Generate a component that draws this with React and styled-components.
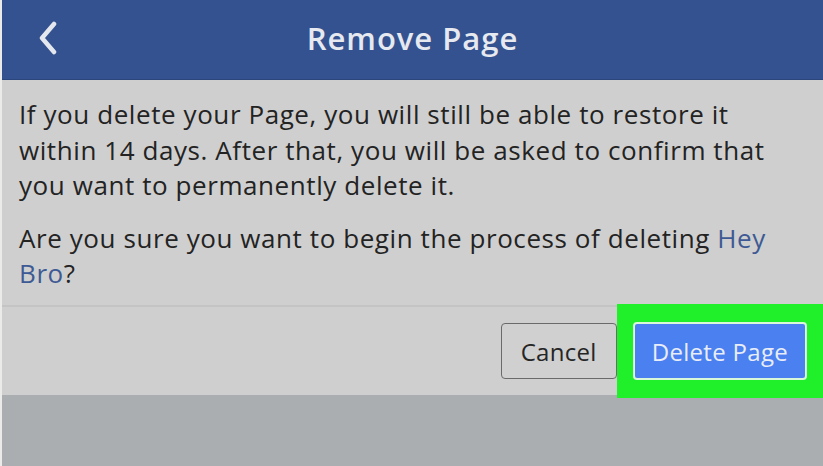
import React from 'react'
import styled, { createGlobalStyle } from 'styled-components'

const Global = createGlobalStyle`
html, body {
  margin: 0;
  padding: 0;
  background: #abaeb1;
}
body {
  font-family: "Open Sans", "Liberation Sans", sans-serif;
}
`

const App = () => {
  return (
    <Screen>
      <Global />
      <Header>
        <Back aria-label="Back">
          <svg width="22" height="34" viewBox="0 0 22 34">
            <path d="M17 3 L5 17 L17 31" fill="none" stroke="#e4e7ee" strokeWidth="4.5" strokeLinecap="round" strokeLinejoin="round" />
          </svg>
        </Back>
        <Title>Remove Page</Title>
      </Header>
      <Body>
        <Para>
          If you delete your Page, you will still be able to restore it within 14 days. After that, you will be asked to confirm that you want to permanently delete it.
        </Para>
        <Para>
          Are you sure you want to begin the process of deleting <PageName>Hey</PageName> <PageName>Bro</PageName>?
        </Para>
      </Body>
      <Actions>
        <Button>Cancel</Button>
        <Highlight>
          <Button primary>Delete Page</Button>
        </Highlight>
      </Actions>
      <Footer />
    </Screen>
  )
}

export default App

const Screen = styled.div`
width: 823px;
height: 466px;
display: flex;
flex-direction: column;
border-left: 2px solid #ebebe9;
box-sizing: border-box;
overflow: hidden;
`
const Header = styled.div`
height: 79px;
flex-shrink: 0;
background-color: #34528f;
border-bottom: 1px solid #2b467c;
display: flex;
align-items: center;
justify-content: center;
position: relative;
`
const Back = styled.div`
position: absolute;
left: 35px;
top: 21px;
`
const Title = styled.div`
font-family: "Open Sans", "Liberation Sans", sans-serif;
font-size: 31px;
font-weight: 600;
color: #e6e9f0;
letter-spacing: 1px;
margin-top: -3px;
`
const Body = styled.div`
background-color: #cfcfcf;
padding: 17px 24px 0 17px;
height: 227px;
flex-shrink: 0;
box-sizing: border-box;
display: flex;
flex-direction: column;
gap: 17px;
border-bottom: 2px solid #c4c4c4;
`
const Para = styled.p`
margin: 0;
font-size: 26px;
line-height: 35.5px;
letter-spacing: 0.58px;
color: #232323;
`
const PageName = styled.span`
color: #3e5a94;
`
const Actions = styled.div`
height: 88px;
flex-shrink: 0;
background-color: #cfcfcf;
display: flex;
align-items: center;
justify-content: flex-end;
`
const Highlight = styled.div`
background-color: #1ff02a;
padding: 18px 16px 18px 16px;
margin: -3px 0;
height: 94px;
box-sizing: border-box;
display: flex;
align-items: center;
position: relative;
`
const Button = styled.div`
height: ${p => (p.primary ? '58px' : '56px')};
box-sizing: border-box;
padding: 0 ${p => (p.primary ? '17px' : '19px')};
display: flex;
align-items: center;
border-radius: 4px;
font-size: 24px;
letter-spacing: 0.3px;
color: ${p => (p.primary ? '#e8edf8' : '#252525')};
background-color: ${p => (p.primary ? '#4a80f0' : '#d0d0d0')};
border: ${p => (p.primary ? '2px solid #d8f8d8' : '1.5px solid #6a6a6a')};
`
const Footer = styled.div`
flex: 1;
background-color: #abaeb1;
`
